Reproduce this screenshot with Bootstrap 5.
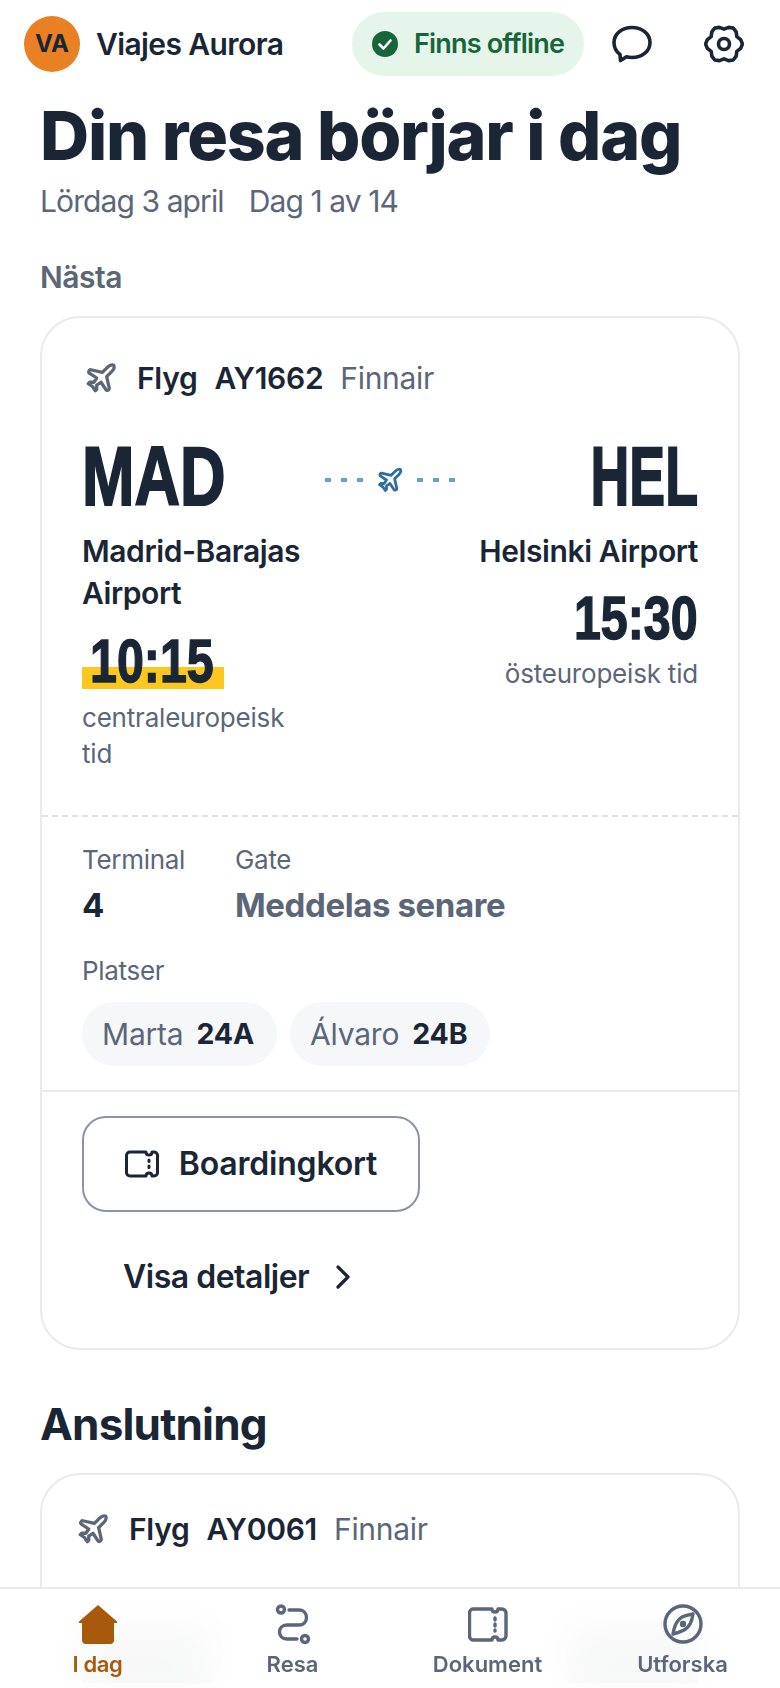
<!DOCTYPE html>
<html lang="sv">
<head>
    <meta charset="UTF-8">
    <meta name="viewport" content="width=device-width, initial-scale=1.0">
    <title>Viajes Aurora</title>
    <link rel="stylesheet" href="https://cdn.jsdelivr.net/npm/bootstrap@5.3.0/dist/css/bootstrap.min.css">
    <style>
        body {
            font-family: Inter, "Noto Sans", sans-serif;
            color: #1a2635;
            background-color: #fff;
            height: 1688px;
            overflow: hidden;
        }
        svg { display: block; flex-shrink: 0; }
        .app-header { height: 88px; padding: 0 36px 0 24px; }
        .app-avatar {
            width: 56px; height: 56px;
            background-color: #e98024;
            font-size: 24px; font-weight: 700;
        }
        .app-brand { font-size: 30px; font-weight: 600; letter-spacing: -.6px; margin-left: 16px; }
        .offline-pill {
            height: 64px; width: 232px;
            margin-left: auto; margin-right: 28px;
            background-color: #e6f5ea; color: #17663a;
            font-size: 27px; font-weight: 600; letter-spacing: -.8px;
        }
        .head-icon { margin-right: 52px; }
        .head-icon:last-child { margin-right: 0; }
        .page-wrap { padding: 0 40px; }
        .page-title { font-size: 68px; font-weight: 800; letter-spacing: -1.2px; line-height: 76px; margin: 9px 0 0; }
        .page-date { font-size: 30px; color: #5b6678; letter-spacing: -.9px; line-height: 40px; margin-top: 8px; gap: 25px; }
        .next-label { font-size: 30px; font-weight: 600; color: #5b6678; letter-spacing: -.5px; line-height: 36px; margin-top: 38px; }
        .trip-card { border: 2px solid #e8eaec; border-radius: 40px; margin-top: 21px; background-color: #fff; }
        .trip-top { padding: 40px 40px 0; height: 497px; }
        .flight-row { font-size: 30px; font-weight: 600; line-height: 40px; gap: 17px; letter-spacing: -.3px; }
        .flight-row .carrier { font-weight: 400; color: #5b6678; }
        .flight-row .plane-ico { margin-left: 2px; margin-right: 2px; }
        .route-row { margin-top: 37px; }
        .route-side { width: 220px; }
        .side-to { white-space: nowrap; }
        .iata {
            font-family: "Liberation Sans", sans-serif;
            font-size: 84px; font-weight: 700; line-height: 82px;
            display: inline-block;
            -webkit-text-stroke: 2px #1a2635;
        }
        .side-from .iata { transform: scaleX(.75); transform-origin: left center; }
        .side-to .iata { transform: scaleX(.64); transform-origin: right center; }
        .side-from .clock { transform-origin: left center; }
        .side-to .clock { transform-origin: right center; }
        .route-mid { height: 90px; gap: 13px; }
        .route-dash {
            width: 38px; height: 4px;
            background: repeating-linear-gradient(to right, #6f9fbf 0, #6f9fbf 6px, transparent 6px, transparent 16px);
        }
        .place-name { font-size: 30px; font-weight: 600; line-height: 42px; letter-spacing: -.4px; margin-top: 13px; }
        .clock {
            font-family: "Liberation Sans", sans-serif;
            font-size: 62px; font-weight: 700; line-height: 60px;
            transform: scaleX(.78); display: inline-block;
            -webkit-text-stroke: 1.5px #1a2635;
        }
        .time-mark {
            display: block; width: 142px; padding-left: 8px; margin-top: 17px; line-height: 60px; height: 62px;
            background: linear-gradient(to bottom, transparent 36px, #fcc81f 36px, #fcc81f 58px, transparent 58px);
        }
        .time-plain { margin-top: 16px; }
        .zone-name { font-size: 26px; color: #5b6678; line-height: 36px; letter-spacing: -.2px; margin-top: 7px; }
        .side-to .zone-name { margin-top: 8px; }
        .info-block { border-top: 2px dashed #dcdfe3; padding: 25px 40px 24px; }
        .info-cell { width: 153px; }
        .info-label { font-size: 26px; color: #5b6678; line-height: 36px; letter-spacing: -.3px; }
        .info-value { font-size: 33px; font-weight: 700; line-height: 48px; letter-spacing: -.4px; margin-top: 3px; }
        .info-value.muted-val { color: #5b6678; }
        .seat-label { margin-top: 24px; }
        .seat-list { margin-top: 13px; gap: 13px; }
        .seat-chip {
            height: 64px; padding: 0 23px 0 20px;
            background-color: #f5f7f9;
            font-size: 30px; color: #5b6678; gap: 13px; letter-spacing: -.2px;
        }
        .seat-chip b { color: #1a2635; font-weight: 700; font-size: 28.500px; }
        .action-block { border-top: 2px solid #e8eaec; padding: 24px 40px 0; height: 258px; }
        .pass-btn {
            width: 338px; height: 96px;
            border: 2px solid #8a94a6; border-radius: 24px;
            font-size: 32px; font-weight: 600; color: #1a2635; gap: 20px; letter-spacing: -.2px;
        }
        .detail-btn {
            font-size: 32px; font-weight: 600; color: #1a2635; gap: 26px;
            padding: 0 0 0 41px; height: 64px; margin-top: 33px; border: 0; letter-spacing: -.5px;
        }
        .section-title { font-size: 44px; font-weight: 700; line-height: 52px; letter-spacing: -.8px; margin: 48px 0 0; }
        .next-card { height: 216px; padding: 34px 32px; margin-top: 23px; }
        .ghost-row { margin-top: 76px; padding: 0 8px; }
        .ghost-code { width: 130px; height: 58px; background-color: #1a2635; }
        .tab-bar {
            height: 101px;
            background-color: rgba(255, 255, 255, .97);
            backdrop-filter: blur(20px);
            border-top: 2px solid #e8eaec;
        }
        .tab-item { font-size: 22px; font-weight: 600; color: #5b6678; line-height: 28px; padding-top: 15px; }
        .tab-item.is-active { color: #a9590c; letter-spacing: -.4px; }
        .tab-item svg { margin-bottom: 6px; }
    </style>
</head>
<body>
    <header class="app-header d-flex align-items-center">
        <div class="app-avatar rounded-circle d-flex align-items-center justify-content-center">VA</div>
        <div class="app-brand">Viajes Aurora</div>
        <div class="offline-pill rounded-pill d-flex align-items-center justify-content-center gap-3">
            <svg width="26" height="26" viewBox="0 0 26 26"><circle cx="13" cy="13" r="13" fill="#17663a"/><path d="M7.500 13.500l4 4 7-8" fill="none" stroke="#fff" stroke-width="2.600" stroke-linecap="round" stroke-linejoin="round"/></svg>
            <span>Finns offline</span>
        </div>
        <svg class="head-icon" width="40" height="40" viewBox="0 0 40 40" fill="none" stroke="#1a2635" stroke-width="3.600" stroke-linejoin="round"><path d="M20 3.500c10.500 0 18 6.500 18 15s-7.500 15-18 15c-2 0-3.800-.2-5.500-.7L8.500 36.500 8 30.500C4 27.500 2 23.500 2 18.500c0-8.500 7.500-15 18-15z"/></svg>
        <svg class="head-icon" width="40" height="40" viewBox="0 0 40 40" fill="none" stroke="#1a2635" stroke-width="3.600" stroke-linejoin="round"><polygon points="38.500,20 36.600,15.550 32.820,12.600 32.160,7.840 29.250,3.980 24.450,3.400 20,5.200 15.550,3.400 10.750,3.980 7.840,7.840 7.180,12.600 3.400,15.550 1.500,20 3.400,24.450 7.180,27.400 7.840,32.160 10.750,36.020 15.550,36.600 20,34.800 24.450,36.600 29.250,36.020 32.160,32.160 32.820,27.400 36.600,24.450"/><circle cx="20" cy="20" r="5.500"/></svg>
    </header>

    <main class="page-wrap">
        <h1 class="page-title">Din resa börjar i dag</h1>
        <div class="page-date d-flex"><span>Lördag 3 april</span><span>Dag 1 av 14</span></div>
        <div class="next-label">Nästa</div>

        <section class="trip-card">
            <div class="trip-top">
                <div class="flight-row d-flex align-items-center">
                    <svg class="plane-ico" width="34" height="34" viewBox="0 0 24 24" fill="none" stroke="#5b6678" stroke-width="2.300" stroke-linejoin="round"><path d="M17.800 19.200 16 11l3.500-3.500C21 6 21.500 4 21 3c-1-.5-3 0-4.500 1.500L13 8 4.800 6.200c-.5-.1-.9.1-1.100.5l-.3.5c-.2.5-.1 1 .3 1.300L9 12l-2 3H4l-1 1 3 2 2 3 1-1v-3l3-2 3.500 5.300c.3.400.8.500 1.300.3l.5-.2c.4-.3.600-.7.500-1.200z"/></svg>
                    <span>Flyg</span><span>AY1662</span><span class="carrier">Finnair</span>
                </div>
                <div class="route-row d-flex justify-content-between">
                    <div class="route-side side-from">
                        <div class="iata">MAD</div>
                        <div class="place-name">Madrid-Barajas Airport</div>
                        <div class="time-mark"><span class="clock">10:15</span></div>
                        <div class="zone-name">centraleuropeisk tid</div>
                    </div>
                    <div class="route-mid d-flex align-items-center">
                        <span class="route-dash"></span>
                        <svg width="28" height="28" viewBox="0 0 24 24" fill="none" stroke="#2f6f9f" stroke-width="2.400" stroke-linejoin="round"><path d="M17.800 19.200 16 11l3.500-3.500C21 6 21.500 4 21 3c-1-.5-3 0-4.500 1.500L13 8 4.800 6.200c-.5-.1-.9.1-1.100.5l-.3.5c-.2.5-.1 1 .3 1.300L9 12l-2 3H4l-1 1 3 2 2 3 1-1v-3l3-2 3.500 5.300c.3.400.8.500 1.300.3l.5-.2c.4-.3.600-.7.500-1.200z"/></svg>
                        <span class="route-dash"></span>
                    </div>
                    <div class="route-side side-to text-end">
                        <div class="iata">HEL</div>
                        <div class="place-name">Helsinki Airport</div>
                        <div class="time-plain"><span class="clock">15:30</span></div>
                        <div class="zone-name">östeuropeisk tid</div>
                    </div>
                </div>
            </div>
            <div class="info-block">
                <div class="d-flex">
                    <div class="info-cell">
                        <div class="info-label">Terminal</div>
                        <div class="info-value">4</div>
                    </div>
                    <div>
                        <div class="info-label">Gate</div>
                        <div class="info-value muted-val">Meddelas senare</div>
                    </div>
                </div>
                <div class="info-label seat-label">Platser</div>
                <div class="seat-list d-flex">
                    <div class="seat-chip rounded-pill d-flex align-items-center"><span>Marta</span><b>24A</b></div>
                    <div class="seat-chip rounded-pill d-flex align-items-center"><span>Álvaro</span><b>24B</b></div>
                </div>
            </div>
            <div class="action-block">
                <button class="pass-btn btn d-flex align-items-center justify-content-center" type="button">
                    <svg width="34" height="28" viewBox="0 0 34 28" fill="none" stroke="#1a2635" stroke-width="3" stroke-linejoin="round"><path d="M5 2h16c0 2 1.500 3 3 3s3-1 3-3h2c2 0 3.500 1.500 3.500 3.500v17c0 2-1.500 3.500-3.500 3.500h-2c0-2-1.500-3-3-3s-3 1-3 3H5c-2 0-3.500-1.500-3.500-3.500v-17C1.500 3.500 3 2 5 2z"/><path d="M24 10v1.500M24 16v1.500" stroke-linecap="round"/></svg>
                    <span>Boardingkort</span>
                </button>
                <button class="detail-btn btn d-flex align-items-center" type="button">
                    <span>Visa detaljer</span>
                    <svg width="16" height="24" viewBox="0 0 16 24" fill="none" stroke="#1a2635" stroke-width="3.200" stroke-linecap="round" stroke-linejoin="round"><path d="M3 2l10 10L3 22"/></svg>
                </button>
            </div>
        </section>

        <h2 class="section-title">Anslutning</h2>
        <section class="trip-card next-card">
            <div class="flight-row d-flex align-items-center">
                <svg class="plane-ico" width="34" height="34" viewBox="0 0 24 24" fill="none" stroke="#5b6678" stroke-width="2.300" stroke-linejoin="round"><path d="M17.800 19.200 16 11l3.500-3.500C21 6 21.500 4 21 3c-1-.5-3 0-4.500 1.500L13 8 4.800 6.200c-.5-.1-.9.1-1.100.5l-.3.5c-.2.5-.1 1 .3 1.300L9 12l-2 3H4l-1 1 3 2 2 3 1-1v-3l3-2 3.500 5.300c.3.400.8.500 1.300.3l.5-.2c.4-.3.600-.7.500-1.200z"/></svg>
                <span>Flyg</span><span>AY0061</span><span class="carrier">Finnair</span>
            </div>
            <div class="ghost-row d-flex justify-content-between">
                <div class="ghost-code"></div>
                <div class="ghost-code"></div>
            </div>
        </section>
    </main>

    <nav class="tab-bar fixed-bottom d-flex">
        <div class="tab-item is-active flex-fill w-25 d-flex flex-column align-items-center">
            <svg width="40" height="40" viewBox="0 0 40 40"><path d="M20 1L39 17.500c.5.500.2 1.500-.6 1.500H36v17.500c0 1.900-1.600 3.500-3.500 3.500h-25C5.600 40 4 38.400 4 36.500V19H1.600c-.8 0-1.100-1-.6-1.500z" fill="#a9590c"/></svg>
            <span>I dag</span>
        </div>
        <div class="tab-item flex-fill w-25 d-flex flex-column align-items-center">
            <svg width="40" height="40" viewBox="0 0 40 40" fill="none" stroke="#5b6678" stroke-width="3.400" stroke-linecap="round"><circle cx="8" cy="5.500" r="3.500"/><circle cx="32" cy="35" r="3.500"/><path d="M16 6h10c10 0 10 15 0 15H14c-10 0-10 14 0 14h10"/></svg>
            <span>Resa</span>
        </div>
        <div class="tab-item flex-fill w-25 d-flex flex-column align-items-center">
            <svg width="40" height="40" viewBox="0 0 40 40" fill="none" stroke="#5b6678" stroke-width="3.400" stroke-linejoin="round"><path d="M5 5h19c0 2 1.500 3 3 3s3-1 3-3h4c2 0 4 2 4 4v23c0 2-2 4-4 4h-4c0-2-1.500-3-3-3s-3 1-3 3H5c-2 0-3.500-2-3.500-4V9C1.500 7 3 5 5 5z"/><path d="M27 14v2M27 20v2M27 26v1" stroke-linecap="round"/></svg>
            <span>Dokument</span>
        </div>
        <div class="tab-item flex-fill w-25 d-flex flex-column align-items-center">
            <svg width="40" height="40" viewBox="0 0 40 40" fill="none" stroke="#5b6678" stroke-width="3.400" stroke-linejoin="round"><circle cx="20" cy="20" r="18"/><path d="M30 10c-1 7-4 13-8 15.500-2 1.200-5 2.500-12 4.500 1-7 3.500-12.500 7-15.500 3-2.500 8-3.700 13-4.500z"/><circle cx="20" cy="20" r="1.500" fill="#5b6678"/></svg>
            <span>Utforska</span>
        </div>
    </nav>

    <script src="https://cdn.jsdelivr.net/npm/bootstrap@5.3.0/dist/js/bootstrap.bundle.min.js"></script>
</body>
</html>
